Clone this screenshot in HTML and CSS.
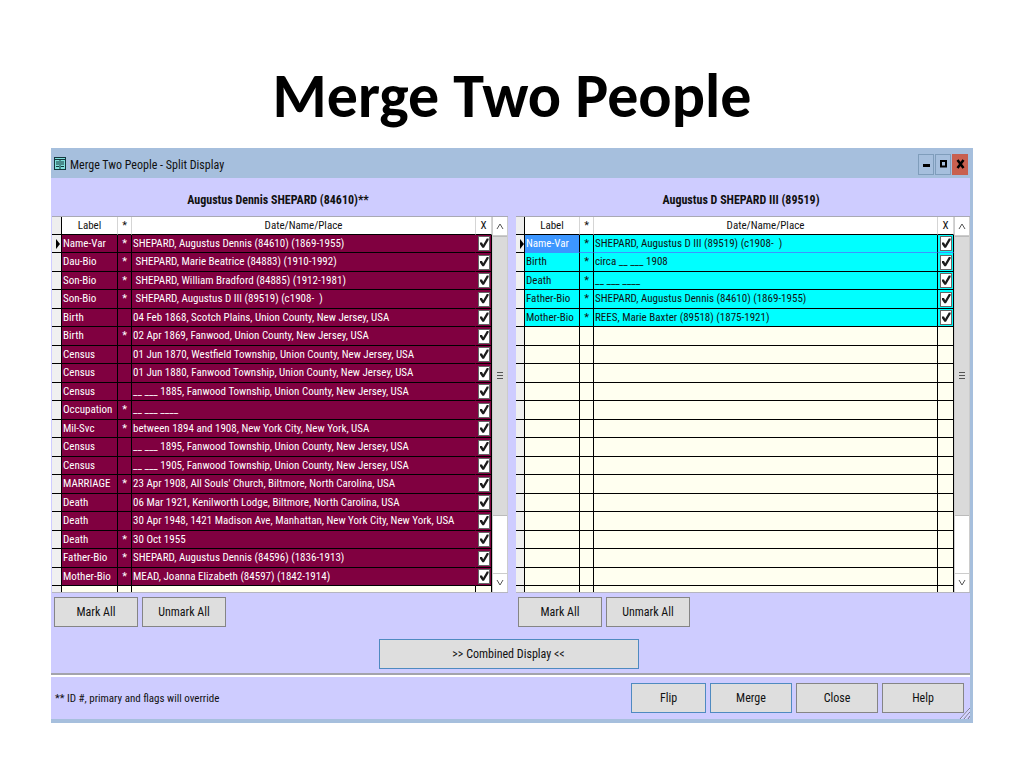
FILE: index.html
```html
<!DOCTYPE html>
<html lang="en">

<head>
  <meta charset="UTF-8" />
  <meta name="viewport" content="width=device-width, initial-scale=1.0" />
  <title>Merge Two People</title>
  <link rel="stylesheet" href="styles.css">
</head>

<body>
  <h1>Merge Two People</h1>
  <div class="window">
    <div class="titlebar">
      <svg class="app-icon" width="12" height="13" viewBox="0 0 12 13">
        <rect x="0.5" y="0.5" width="11" height="12" fill="#7fe0dc" stroke="#12373c" />
        <path d="M1 2.5h10M2 5h3M2 7h3M2 9.5h3M7 5h3M7 7h3M7 9.5h3M6 3v9" stroke="#12373c" fill="none" />
      </svg>
      <span class="caption">Merge Two People - Split Display</span>
      <button class="win-btn" aria-label="Minimize">
        <svg width="9" height="10" viewBox="0 0 9 10"><path d="M1 6.500h7" stroke="#000" stroke-width="3" /></svg>
      </button>
      <button class="win-btn" aria-label="Maximize">
        <svg width="9" height="10" viewBox="0 0 9 10"><path d="M2 2h5v5.500h-5z" stroke="#000" stroke-width="2" fill="none" /></svg>
      </button>
      <button class="win-btn close" aria-label="Close window">
        <svg width="9" height="10" viewBox="0 0 9 10"><path d="M1.500 1l6 8M7.500 1l-6 8" stroke="#000" stroke-width="2.500" /></svg>
      </button>
    </div>

    <div class="content">
      <div class="panes">
        <section class="pane">
          <h2>Augustus Dennis SHEPARD (84610)**</h2>
          <div class="list">
            <div class="view">
              <table class="left">
                <thead>
                  <tr><th class="gutter"></th><th class="label">Label</th><th class="star">*</th><th>Date/Name/Place</th><th class="mark">X</th></tr>
                </thead>
                <tbody></tbody>
              </table>
            </div>
            <div class="scrollbar">
              <button aria-label="Scroll up"><svg width="8" height="8" viewBox="0 0 8 8"><path d="M1 7l3-5 3 5" /></svg></button>
              <div class="track"><div class="thumb"><i></i></div></div>
              <button aria-label="Scroll down"><svg width="8" height="8" viewBox="0 0 8 8"><path d="M1 1l3 5 3-5" /></svg></button>
            </div>
          </div>
          <div class="pane-buttons">
            <button class="btn">Mark All</button>
            <button class="btn">Unmark All</button>
          </div>
        </section>

        <section class="pane">
          <h2>Augustus D SHEPARD III (89519)</h2>
          <div class="list">
            <div class="view">
              <table class="right">
                <thead>
                  <tr><th class="gutter"></th><th class="label">Label</th><th class="star">*</th><th>Date/Name/Place</th><th class="mark">X</th></tr>
                </thead>
                <tbody></tbody>
              </table>
            </div>
            <div class="scrollbar">
              <button aria-label="Scroll up"><svg width="8" height="8" viewBox="0 0 8 8"><path d="M1 7l3-5 3 5" /></svg></button>
              <div class="track"><div class="thumb"><i></i></div></div>
              <button aria-label="Scroll down"><svg width="8" height="8" viewBox="0 0 8 8"><path d="M1 1l3 5 3-5" /></svg></button>
            </div>
          </div>
          <div class="pane-buttons">
            <button class="btn">Mark All</button>
            <button class="btn">Unmark All</button>
          </div>
        </section>
      </div>

      <div class="combined">
        <button class="btn blue">&gt;&gt; Combined Display &lt;&lt;</button>
      </div>

      <div class="footer">
        <p>** ID #, primary and flags will override</p>
        <button class="btn blue flip">Flip</button>
        <button class="btn blue">Merge</button>
        <button class="btn">Close</button>
        <button class="btn">Help</button>
        <svg class="grip" width="11" height="12" viewBox="0 0 11 12">
          <path d="M1 12L11 1M5 12l6-7M9 12l2-3" stroke="#77778c" fill="none" />
          <path d="M2 12L11 2M6 12l5-6" stroke="#fff" fill="none" stroke-width="0.500" />
        </svg>
      </div>
    </div>
  </div>

  <script>
    // label, star, text
    const leftData = [
      ['Name-Var', '*', 'SHEPARD, Augustus Dennis (84610) (1869-1955)'],
      ['Dau-Bio', '*', ' SHEPARD, Marie Beatrice (84883) (1910-1992)'],
      ['Son-Bio', '*', ' SHEPARD, William Bradford (84885) (1912-1981)'],
      ['Son-Bio', '*', ' SHEPARD, Augustus D III (89519) (c1908-  )'],
      ['Birth', '', '04 Feb 1868, Scotch Plains, Union County, New Jersey, USA'],
      ['Birth', '*', '02 Apr 1869, Fanwood, Union County, New Jersey, USA'],
      ['Census', '', '01 Jun 1870, Westfield Township, Union County, New Jersey, USA'],
      ['Census', '', '01 Jun 1880, Fanwood Township, Union County, New Jersey, USA'],
      ['Census', '', '__ ___ 1885, Fanwood Township, Union County, New Jersey, USA'],
      ['Occupation', '*', '__ ___ ____'],
      ['Mil-Svc', '*', 'between 1894 and 1908, New York City, New York, USA'],
      ['Census', '', '__ ___ 1895, Fanwood Township, Union County, New Jersey, USA'],
      ['Census', '', '__ ___ 1905, Fanwood Township, Union County, New Jersey, USA'],
      ['MARRIAGE', '*', "23 Apr 1908, All Souls' Church, Biltmore, North Carolina, USA"],
      ['Death', '', '06 Mar 1921, Kenilworth Lodge, Biltmore, North Carolina, USA'],
      ['Death', '', '30 Apr 1948, 1421 Madison Ave, Manhattan, New York City, New York, USA'],
      ['Death', '*', '30 Oct 1955'],
      ['Father-Bio', '*', 'SHEPARD, Augustus Dennis (84596) (1836-1913)'],
      ['Mother-Bio', '*', 'MEAD, Joanna Elizabeth (84597) (1842-1914)'],
    ]
    const rightData = [
      ['Name-Var', '*', 'SHEPARD, Augustus D III (89519) (c1908-  )'],
      ['Birth', '*', 'circa __ ___ 1908'],
      ['Death', '*', '__ ___ ____'],
      ['Father-Bio', '*', 'SHEPARD, Augustus Dennis (84610) (1869-1955)'],
      ['Mother-Bio', '*', 'REES, Marie Baxter (89518) (1875-1921)'],
    ]

    function fill(selector, data) {
      let html = ''
      for (let i = 0; i < 20; i++) {
        const row = data[i]
        if (row) {
          html += `<tr class="filled"><td class="gutter"></td><td class="label">${row[0]}</td><td class="star">${row[1]}</td><td>${row[2]}</td><td class="mark"><input type="checkbox" aria-label="${row[0]}" checked></td></tr>`
        } else {
          html += '<tr><td class="gutter"></td><td class="label"></td><td class="star"></td><td></td><td class="mark"></td></tr>'
        }
      }
      document.querySelector(selector + ' tbody').innerHTML = html
    }

    fill('.left', leftData)
    fill('.right', rightData)
  </script>
</body>

</html>
```
FILE: styles.css
```css
* {
  box-sizing: border-box;
}

body {
  margin: 0;
  padding: 56px 51px 0;
  background: #fff;
  color: #111;
  font-family: "Roboto Condensed", "Liberation Sans Narrow", "Liberation Sans", sans-serif;
  font-size: 11px;
}

h1 {
  margin: 0 0 12px;
  font: bold 62px/80px Carlito, Lato, sans-serif;
  text-align: center;
  color: #000;
}

button {
  font: inherit;
  color: inherit;
  padding: 0;
}

.window {
  background: #a6bfdd;
  padding: 0 3px 4px 0;
}

.titlebar {
  height: 30px;
  display: flex;
  align-items: center;
  gap: 1px;
  padding: 0 2px 0 3px;
}

.caption {
  flex: 1;
  padding: 4px 0 0 3px;
  font-size: 12px;
}

.win-btn {
  width: 16px;
  height: 21px;
  margin-top: 2px;
  border: 1px solid #7f9dbb;
  background: #a6bfdd;
  display: flex;
  align-items: center;
  justify-content: center;
}

.win-btn.close {
  border-color: #c75f50;
  background: #c9604f;
}

.content {
  background: #ceccff;
}

.panes {
  display: grid;
  grid-template-columns: 456fr 454fr;
  gap: 8px;
  padding-left: 1px;
}

.pane h2 {
  margin: 0;
  padding: 6px 4px 0 0;
  font-size: 12px;
  line-height: 32px;
  text-align: center;
}

.list {
  display: flex;
  height: 377px;
  background: #fff;
  border-top: 1px solid #a9a9b4;
  border-bottom: 1px solid #b5b5c0;
}

.view {
  flex: 1;
  overflow: hidden;
}

table {
  width: 100%;
  table-layout: fixed;
  border-collapse: separate;
  border-spacing: 0;
}

th {
  height: 18px;
  padding: 0;
  font-weight: normal;
  background: #fff;
  border-right: 1px solid #d5d5d5;
  border-bottom: 1px solid #000;
}

td {
  height: 18px;
  padding: 0 0 0 1px;
  background: #fffff0;
  border-right: 1px solid #000;
  border-bottom: 1px solid #000;
  white-space: pre;
  line-height: 14px;
}

tr:nth-child(even) td {
  height: 19px;
}

th.gutter {
  width: 10px;
  background: #eee;
  border-right-color: #000;
}

.right th.gutter {
  width: 9px;
}

td.gutter {
  background: #f0f0f0;
  padding: 0;
}

tbody tr:first-child .gutter::after {
  content: "";
  display: block;
  margin-left: 4px;
  border: solid transparent;
  border-width: 5px 0 5px 4px;
  border-left-color: #000;
}

th.label {
  width: 56px;
}

.right th.label {
  width: 55px;
}

th.star {
  width: 14px;
}

th.mark {
  width: 16px;
}

.star {
  text-align: center;
  padding: 0;
}

.left .filled td:not(.gutter) {
  background: #800040;
  color: #fff;
}

.right .filled td:not(.gutter) {
  background: #0ff;
}

.right .filled:first-child td:not(.gutter) {
  border-bottom-color: #3c96ff;
}

.right .filled:first-child td.label {
  background: #3c96ff;
  color: #fff;
}

.left .filled td:nth-child(4) {
  border-right-color: transparent;
}

td.mark {
  padding: 0 0 0 2px;
}

.mark input {
  appearance: none;
  display: block;
  width: 12px;
  height: 15px;
  margin: 0;
  background: #fff;
  border: 1px solid #666;
}

.mark input:checked::before {
  content: "";
  display: block;
  width: 10px;
  height: 12px;
  background: #1c1c1c;
  clip-path: polygon(10% 45%, 30% 45%, 42% 65%, 78% 12%, 96% 12%, 96% 25%, 50% 90%, 34% 90%, 10% 60%);
}

.scrollbar {
  width: 16px;
  display: flex;
  flex-direction: column;
  background: #fff;
  border-left: 1px solid #ccc;
  border-right: 1px solid #ccc;
}

.scrollbar button {
  height: 19px;
  border: 0;
  border-bottom: 1px solid #ccc;
  background: #fff;
  display: flex;
  align-items: center;
  justify-content: center;
}

.scrollbar button:last-child {
  border-top: 1px solid #ccc;
  border-bottom: 0;
}

.scrollbar path {
  stroke: #555;
  fill: none;
}

.track {
  flex: 1;
}

.thumb {
  height: 83%;
  background: #dadada;
  border: 1px solid #bbb;
  border-width: 1px 0;
  display: flex;
  align-items: center;
  justify-content: center;
}

.thumb i {
  width: 6px;
  height: 8px;
  background: repeating-linear-gradient(#555 0 1px, #dadada 1px 3px);
}

.pane-buttons {
  display: flex;
  gap: 4px;
  padding: 4px 2px 0;
}

.btn {
  width: 84px;
  height: 30px;
  border: 1px solid #858585;
  background: #dedede;
  font-size: 12px;
}

.btn.blue {
  border-color: #4f8ac0;
}

.combined {
  padding: 12px 4px 4px 0;
  text-align: center;
  border-bottom: 2px solid #a3a3ad;
}

.combined .btn {
  display: block;
  width: 260px;
  margin: 0 auto;
}

.footer {
  position: relative;
  display: flex;
  align-items: center;
  gap: 4px;
  padding: 6px 6px 6px 4px;
  border-top: 2px solid #fff;
}

.footer p {
  flex: 1;
  margin: 0;
}

.footer .btn {
  width: 82px;
}

.footer .flip {
  width: 75px;
}

.grip {
  position: absolute;
  right: 0;
  bottom: 0;
}
```
